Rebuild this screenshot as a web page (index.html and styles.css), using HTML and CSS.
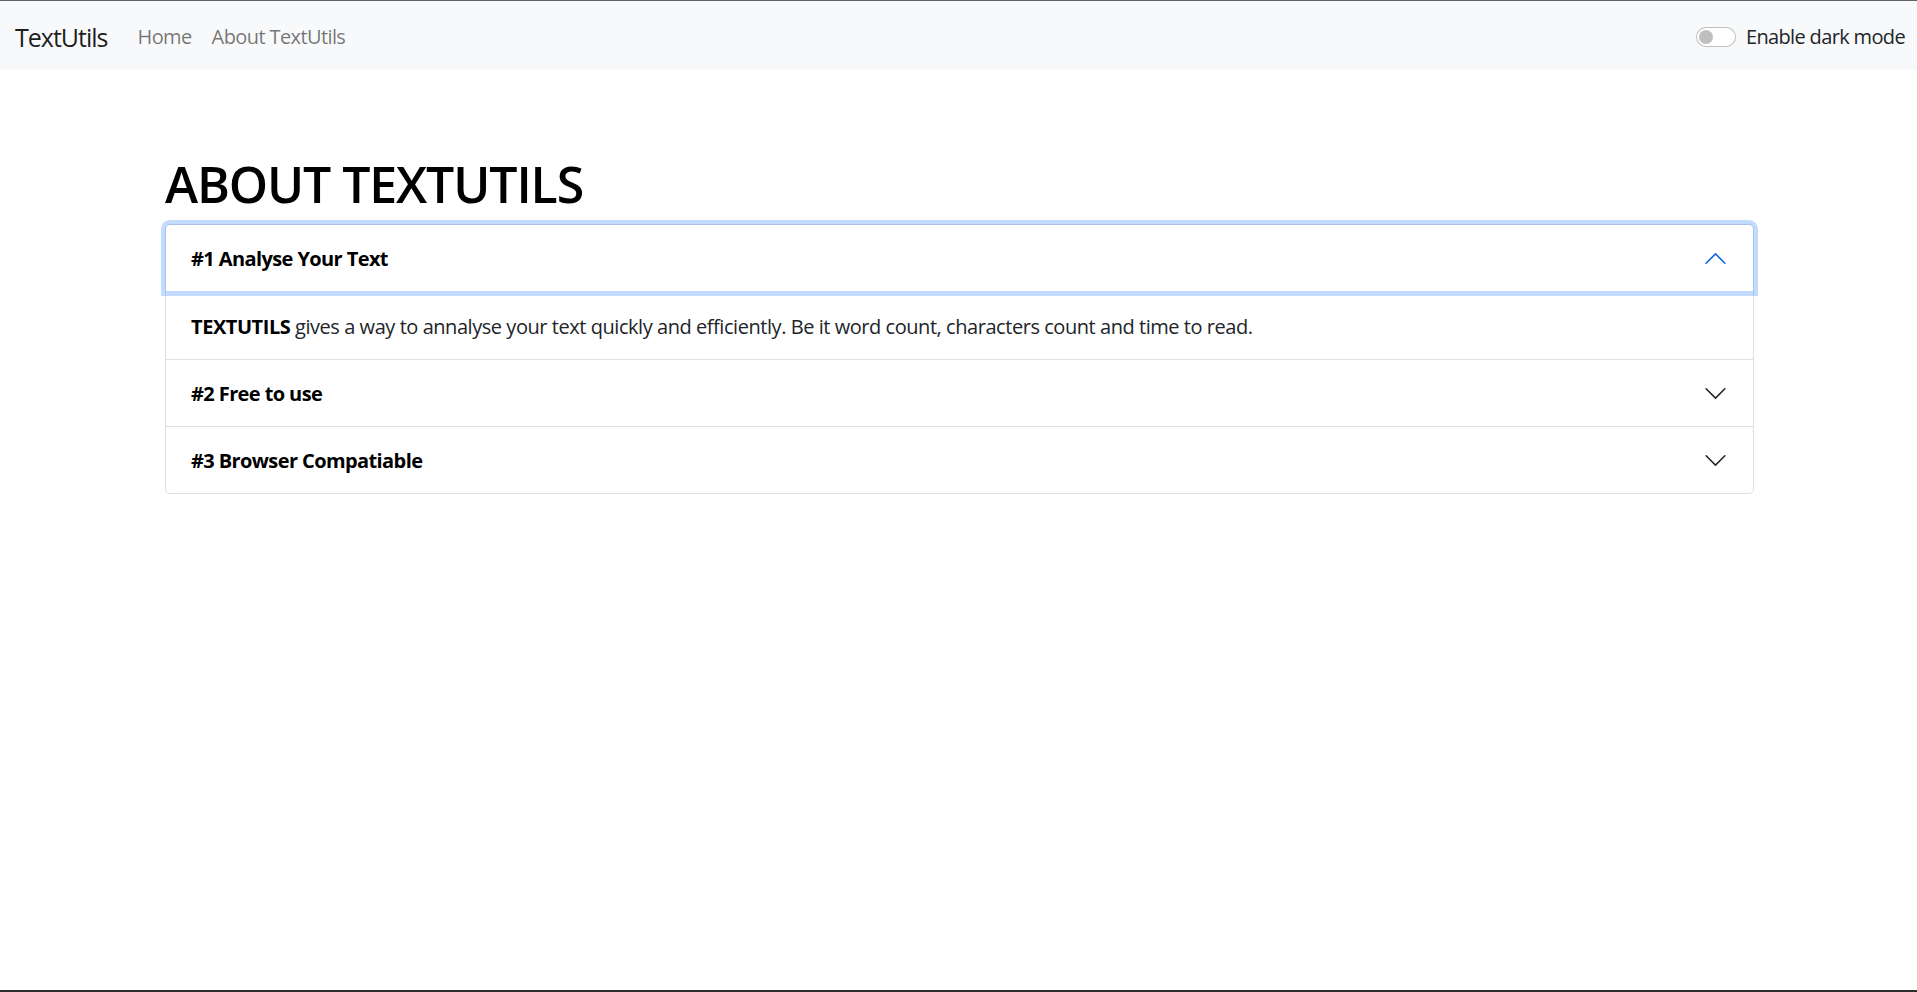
FILE: index.html
```html
<!DOCTYPE html>
<html lang="en">
<head>
<meta charset="utf-8">
<title>TextUtils - About</title>
<link rel="stylesheet" href="styles.css">
</head>
<body>
<div class="page">
  <nav class="navbar">
    <div class="nav-left">
      <a class="brand" href="#">TextUtils</a>
      <ul class="nav-links">
        <li><a class="nav-link" href="#">Home</a></li>
        <li><a class="nav-link" href="#">About TextUtils</a></li>
      </ul>
    </div>
    <div class="switch">
      <span class="switch-track"><span class="switch-knob"></span></span>
      <label class="switch-label">Enable dark mode</label>
    </div>
  </nav>

  <main class="container">
    <h1 class="title">ABOUT TEXTUTILS</h1>
    <div class="accordion">
      <div class="acc-item">
        <div class="acc-header acc-open">
          <strong>#1 Analyse Your Text</strong>
          <svg class="chev chev-up" viewBox="0 0 16 16" width="25" height="25"><path fill="currentColor" fill-rule="evenodd" d="M1.646 4.646a.5.5 0 0 1 .708 0L8 10.293l5.646-5.647a.5.5 0 0 1 .708.708l-6 6a.5.5 0 0 1-.708 0l-6-6a.5.5 0 0 1 0-.708z"/></svg>
        </div>
        <div class="acc-body"><strong>TEXTUTILS</strong> gives a way to annalyse your text quickly and efficiently. Be it word count, characters count and time to read.</div>
      </div>
      <div class="acc-item">
        <div class="acc-header">
          <strong>#2 Free to use</strong>
          <svg class="chev" viewBox="0 0 16 16" width="25" height="25"><path fill="currentColor" fill-rule="evenodd" d="M1.646 4.646a.5.5 0 0 1 .708 0L8 10.293l5.646-5.647a.5.5 0 0 1 .708.708l-6 6a.5.5 0 0 1-.708 0l-6-6a.5.5 0 0 1 0-.708z"/></svg>
        </div>
      </div>
      <div class="acc-item">
        <div class="acc-header">
          <strong>#3 Browser Compatiable</strong>
          <svg class="chev" viewBox="0 0 16 16" width="25" height="25"><path fill="currentColor" fill-rule="evenodd" d="M1.646 4.646a.5.5 0 0 1 .708 0L8 10.293l5.646-5.647a.5.5 0 0 1 .708.708l-6 6a.5.5 0 0 1-.708 0l-6-6a.5.5 0 0 1 0-.708z"/></svg>
        </div>
      </div>
    </div>
  </main>
</div>
</body>
</html>
```

FILE: styles.css
```css
* { box-sizing: border-box; }
html, body { margin: 0; padding: 0; }
body {
  font-family: "Open Sans", "Noto Sans", sans-serif;
  font-size: 20px;
  color: #212529;
  background: #fff;
}
.page {
  height: 100vh;
  border-top: 1px solid #606060;
  border-bottom: 2px solid #2e2e2e;
  display: flex;
  flex-direction: column;
}
.navbar {
  height: 69px;
  flex: none;
  background: #f8f9fa;
  display: flex;
  align-items: center;
  justify-content: space-between;
  padding: 2px 12px 0 15px;
}
.nav-left { display: flex; align-items: center; }
.brand {
  font-size: 25px;
  color: rgba(0,0,0,.9);
  text-decoration: none;
  margin-right: 20px;
  letter-spacing: -1px;
}
.nav-links { display: flex; list-style: none; margin: 0; padding: 0; }
.nav-link {
  display: block;
  padding: 0 10px;
  color: rgba(0,0,0,.55);
  text-decoration: none;
  letter-spacing: -0.6px;
}
.switch { display: flex; align-items: center; gap: 10px; }
.switch-track {
  width: 40px;
  height: 20px;
  border: 1px solid rgba(0,0,0,.25);
  border-radius: 10px;
  background: #fff;
  display: flex;
  align-items: center;
  padding-left: 2px;
}
.switch-knob {
  width: 14px;
  height: 14px;
  border-radius: 50%;
  background: #bfbfbf;
}
.switch-label { color: #212529; letter-spacing: -0.65px; }

.container {
  width: 1591px;
  margin: 0 auto;
  padding: 84px 0 0 2px;
}
.title {
  font-size: 50px;
  font-weight: 600;
  line-height: 60px;
  margin: 0 0 10px;
  color: #000;
  letter-spacing: -1.1px;
}
.accordion { display: flex; flex-direction: column; }
.acc-item {
  border: 1px solid rgba(0,0,0,.125);
  background: #fff;
}
.acc-item:not(:first-child) { border-top: 0; }
.acc-item:first-child { border-radius: 5px 5px 0 0; }
.acc-item:last-child { border-radius: 0 0 5px 5px; }
.acc-header {
  display: flex;
  align-items: center;
  justify-content: space-between;
  padding: 21px 25px 19px;
  line-height: 26px;
  color: #000;
  letter-spacing: -0.6px;
}
.acc-header .chev { margin-top: -2px; }
.acc-open {
  position: relative;
  z-index: 3;
  border-radius: 4px 4px 0 0;
  box-shadow: 0 0 0 5px rgba(13,110,253,.25);
}
.chev { flex: none; color: #212529; }
.chev-up { transform: rotate(180deg); color: #0c63e4; }
.acc-body {
  padding: 22px 25px 18px;
  line-height: 28px;
  letter-spacing: -0.45px;
}
.acc-body strong { color: #000; }
```
